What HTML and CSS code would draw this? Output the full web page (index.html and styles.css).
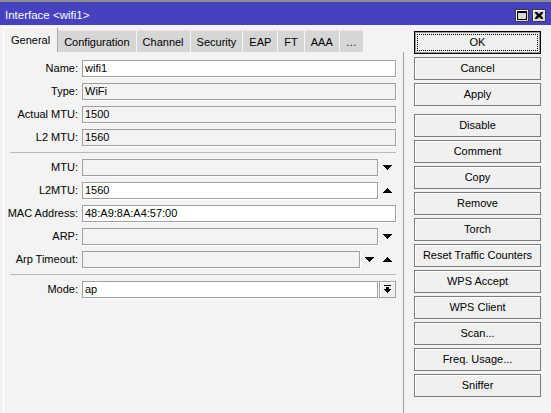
FILE: index.html
```html
<!DOCTYPE html>
<html>
<head>
<meta charset="utf-8">
<link rel="stylesheet" href="styles.css">
</head>
<body>
<div class="window">
  <div class="titlebar">
    <span class="title">Interface &lt;wifi1&gt;</span>
    <div class="tbtns">
      <span class="tbtn"><svg width="10" height="9" viewBox="0 0 10 9"><path d="M0 0h10v9H0z M1 2v6h8V2z" fill="#000" fill-rule="evenodd"/></svg></span>
      <span class="tbtn"><svg width="8" height="7" viewBox="0 0 8 7"><path d="M0 0h2l2 2 2-2h2v1L6 3.5 8 6v1H6L4 5 2 7H0V6l2-2.5L0 1z" fill="#000"/></svg></span>
    </div>
  </div>
  <div class="main">
    <div class="left">
      <div class="tabs">
        <div class="tab active">General</div>
        <div class="tab">Configuration</div>
        <div class="tab">Channel</div>
        <div class="tab">Security</div>
        <div class="tab">EAP</div>
        <div class="tab">FT</div>
        <div class="tab">AAA</div>
        <div class="tab">…</div>
      </div>
      <div class="panel">
        <div class="row"><span class="label">Name:</span><div class="field edit">wifi1</div></div>
        <div class="row"><span class="label">Type:</span><div class="field">WiFi</div></div>
        <div class="row"><span class="label">Actual MTU:</span><div class="field">1500</div></div>
        <div class="row"><span class="label">L2 MTU:</span><div class="field">1560</div></div>
        <div class="sep"></div>
        <div class="row"><span class="label">MTU:</span><div class="field"></div>
          <span class="spin"><svg width="9" height="5" viewBox="0 0 9 5"><path d="M0 0h9v1h-1v1h-1v1h-1v1h-1v1h-1v-1h-1v-1h-1v-1h-1v-1h-1z"/></svg></span></div>
        <div class="row"><span class="label">L2MTU:</span><div class="field edit">1560</div>
          <span class="spin"><svg width="9" height="5" viewBox="0 0 9 5"><path d="M0 5h9v-1h-1v-1h-1v-1h-1v-1h-1v-1h-1v1h-1v1h-1v1h-1v1h-1z"/></svg></span></div>
        <div class="row"><span class="label">MAC Address:</span><div class="field edit">48:A9:8A:A4:57:00</div></div>
        <div class="row"><span class="label">ARP:</span><div class="field"></div>
          <span class="spin"><svg width="9" height="5" viewBox="0 0 9 5"><path d="M0 0h9v1h-1v1h-1v1h-1v1h-1v1h-1v-1h-1v-1h-1v-1h-1v-1h-1z"/></svg></span></div>
        <div class="row"><span class="label">Arp Timeout:</span><div class="field"></div>
          <span class="spin"><svg width="9" height="5" viewBox="0 0 9 5"><path d="M0 0h9v1h-1v1h-1v1h-1v1h-1v1h-1v-1h-1v-1h-1v-1h-1v-1h-1z"/></svg></span>
          <span class="spin"><svg width="9" height="5" viewBox="0 0 9 5"><path d="M0 5h9v-1h-1v-1h-1v-1h-1v-1h-1v-1h-1v1h-1v1h-1v1h-1v1h-1z"/></svg></span></div>
        <div class="sep"></div>
        <div class="row"><span class="label">Mode:</span><div class="field edit">ap</div>
          <span class="dropbtn"><svg width="9" height="9" viewBox="0 0 9 9"><path d="M1 0h7v1H1z M3 2h3v2h2v1h-1v1h-1v1h-1v1h-1v-1h-1v-1h-1v-1h-1v-1h2z"/></svg></span></div>
      </div>
    </div>
    <div class="right">
      <div class="btn ok">OK</div>
      <div class="btn">Cancel</div>
      <div class="btn gap">Apply</div>
      <div class="btn">Disable</div>
      <div class="btn">Comment</div>
      <div class="btn">Copy</div>
      <div class="btn">Remove</div>
      <div class="btn">Torch</div>
      <div class="btn">Reset Traffic Counters</div>
      <div class="btn">WPS Accept</div>
      <div class="btn">WPS Client</div>
      <div class="btn">Scan...</div>
      <div class="btn">Freq. Usage...</div>
      <div class="btn">Sniffer</div>
    </div>
  </div>
</div>
</body>
</html>
```
FILE: styles.css
```css
html, body {
  margin: 0;
  padding: 0;
}
body {
  width: 551px;
  height: 413px;
  overflow: hidden;
  background: #f3f3f3;
  font-family: "Liberation Sans", Arial, sans-serif;
  font-size: 11px;
  color: #000;
}
.window {
  border-top: 2px solid #8e8e8e;
  height: 411px;
  display: flex;
  flex-direction: column;
}
.titlebar {
  height: 23px;
  background: #4541bf;
  display: flex;
  justify-content: space-between;
  align-items: flex-start;
  flex: none;
}
.title {
  color: #fff;
  font-size: 11.5px;
  line-height: 14px;
  padding: 6px 0 0 5px;
}
.tbtns {
  display: flex;
  gap: 3px;
  padding: 7px 5px 0 0;
}
.tbtn {
  width: 14px;
  height: 13px;
  box-sizing: border-box;
  background: #d8d8d8;
  border: 1px solid #3a3a3a;
  box-shadow: inset 1px 1px 0 #fff;
  display: flex;
  align-items: center;
  justify-content: center;
}
.main {
  flex: 1;
  display: flex;
  min-height: 0;
}
.left {
  width: 404px;
  padding-left: 3px;
  box-sizing: border-box;
  display: flex;
  flex-direction: column;
}
.tabs {
  height: 27px;
  flex: none;
  display: flex;
  align-items: flex-end;
  padding-left: 1px;
}
.tab {
  height: 22px;
  line-height: 22px;
  padding: 0 6px;
  background: #d6d6d6;
  border-right: 1px solid #f6f6f6;
  border-top: 1px solid #e4e4e4;
  box-sizing: border-box;
}
.tab.active {
  height: 25px;
  padding: 1px 7px 0;
  background: #f3f3f3;
  border-top: 1px solid #fff;
  border-left: 1px solid #fff;
  border-right: 1px solid #a8a8a8;
  margin-left: -1px;
}
.panel {
  flex: 1;
  border-left: 1px solid #fff;
  border-right: 1px solid #a0a0a0;
  padding: 8px 7px 0 0;
}
.row {
  display: flex;
  align-items: center;
  height: 17px;
  margin-bottom: 6px;
}
.label {
  width: 74px;
  margin-right: 4px;
  text-align: right;
  white-space: nowrap;
  line-height: 17px;
}
.field {
  flex: 1;
  height: 17px;
  box-sizing: border-box;
  border: 1px solid #a0a0a0;
  box-shadow: 1px 1px 0 #fff;
  background: #f3f3f3;
  line-height: 15px;
  padding-left: 2px;
  white-space: nowrap;
}
.field.edit {
  background: #fff;
}
.spin {
  width: 18px;
  height: 17px;
  display: flex;
  align-items: center;
  justify-content: center;
}
.spin svg, .dropbtn svg {
  fill: #000;
  display: block;
}
.dropbtn {
  width: 17px;
  height: 17px;
  margin-left: 1px;
  box-sizing: border-box;
  border: 1px solid #a0a0a0;
  box-shadow: inset 1px 1px 0 #fff;
  background: #f0f0f0;
  display: flex;
  align-items: center;
  justify-content: center;
}
.sep {
  height: 1px;
  background: #b8b8b8;
  margin: 1px 0 6px 6px;
}
.right {
  width: 147px;
  box-sizing: border-box;
  padding: 6px 0 0 10px;
  display: flex;
  flex-direction: column;
  gap: 3px;
}
.btn {
  width: 127px;
  height: 23px;
  box-sizing: border-box;
  border: 1px solid #7c7c7c;
  background: #f0f0f0;
  box-shadow: inset 1px 1px 0 #fff;
  text-align: center;
  line-height: 21px;
  white-space: nowrap;
}
.btn.gap {
  margin-bottom: 5px;
}
.btn.ok {
  position: relative;
  border-color: #000;
  box-shadow: inset 0 0 0 1px #9a9a9a;
}
.btn.ok::after {
  content: "";
  position: absolute;
  top: 2px;
  left: 2px;
  right: 2px;
  bottom: 2px;
  border: 1px dotted #000;
}
```
